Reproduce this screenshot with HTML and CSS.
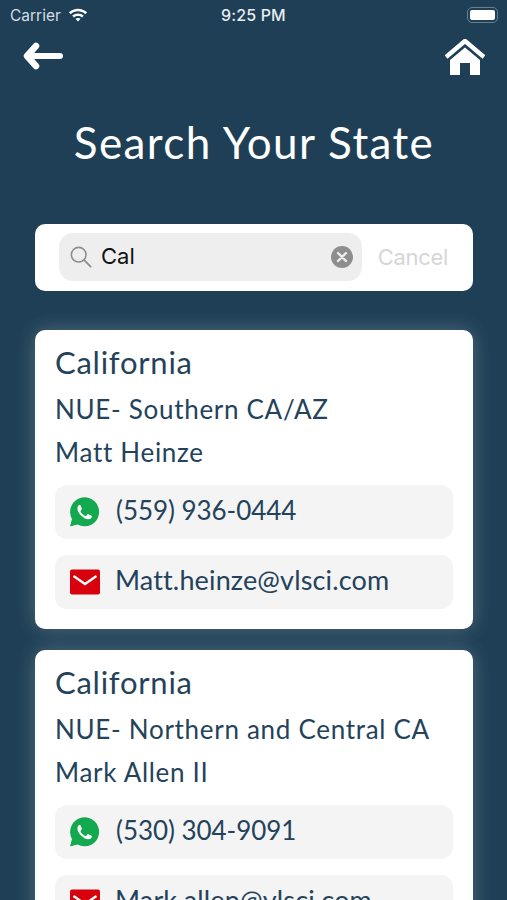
FILE: index.html
```html
<!DOCTYPE html>
<html lang="en">
<head>
<meta charset="utf-8">
<title>Search Your State</title>
<link rel="stylesheet" href="styles.css">
</head>
<body>
<div class="screen">
  <div class="status">
    <div class="status-left">
      <span>Carrier</span>
      <svg class="wifi" viewBox="0 0 22 16"><path d="M1 5.600C6.800.3 15.200.3 21 5.600l-2 2.100C14.300 3.500 7.700 3.500 3 7.700z"/><path d="M4.600 9.200c3.700-3.200 9.100-3.200 12.800 0l-2 2.100c-2.600-2.100-6.200-2.100-8.800 0z"/><path d="M8.200 12.700c1.600-1.200 4-1.200 5.600 0L11 15.600z"/></svg>
    </div>
    <span class="time">9:25 PM</span>
    <div class="battery"><span class="battery-fill"></span></div>
  </div>
  <div class="nav">
    <svg class="back" viewBox="0 0 40 28"><path d="M13 4 4 14l9 10" fill="none" stroke="#fff" stroke-width="6.500" stroke-linecap="round" stroke-linejoin="round"/><path d="M5 14h32" stroke="#fff" stroke-width="6" stroke-linecap="round"/></svg>
    <svg class="home" viewBox="0 0 40 36"><path d="M1 18 20 2l19 16" fill="none" stroke="#fff" stroke-width="4.500" stroke-linejoin="miter"/><path d="M5 21 20 8.500 35 21v15H25V24H15v12H5z" fill="#fff"/></svg>
  </div>
  <h1 class="title">Search Your State</h1>
  <div class="searchbar">
    <div class="field">
      <svg class="glass" viewBox="0 0 24 24"><circle cx="9.500" cy="9.500" r="8" fill="none" stroke="#8e8e8e" stroke-width="1.700"/><path d="m15.500 15.500 7 7" stroke="#8e8e8e" stroke-width="2" stroke-linecap="round"/></svg>
      <span class="query">Cal</span>
      <svg class="clear" viewBox="0 0 22 22"><circle cx="11" cy="11" r="11" fill="#8e8e8e"/><path d="m7 7 8 8m0-8-8 8" stroke="#eee" stroke-width="2.400" stroke-linecap="round"/></svg>
    </div>
    <span class="cancel">Cancel</span>
  </div>
  <div class="card">
    <div class="state">California</div>
    <div class="line">NUE- Southern CA/AZ</div>
    <div class="line">Matt Heinze</div>
    <div class="contact">
      <svg class="icon" viewBox="1 0 30 30"><path d="M1 29.500 3 22A14.500 14.500 0 1 1 8.500 27.500z" fill="#12a94f"/><path d="M10.800 7.800c-.7 0-2.400 1.300-2.400 3.700 0 4.500 6.300 10.800 10.800 10.800 2.400 0 3.600-1.700 3.600-2.600 0-.6-.2-.9-.6-1.100l-2.800-1.400c-.5-.2-.8 0-1.100.4l-1 1.200c-.3.300-.6.300-1 .1-2-.9-3.700-2.500-4.700-4.500-.2-.4-.1-.7.200-1l.8-1c.3-.3.300-.7.100-1.100l-1.100-2.700c-.3-.7-.6-.8-1.200-.8z" fill="#fff"/></svg>
      <span class="phone">(559) 936-0444</span>
    </div>
    <div class="contact">
      <svg class="icon mail" viewBox="0 0 30 25"><rect width="30" height="25" rx="2" fill="#d9000d"/><path d="m3.500 6.500 11.500 8 11.500-8" fill="none" stroke="#fff" stroke-width="2.400"/></svg>
      <span class="email">Matt.heinze@vlsci.com</span>
    </div>
  </div>
  <div class="card">
    <div class="state">California</div>
    <div class="line">NUE- Northern and Central CA</div>
    <div class="line">Mark Allen II</div>
    <div class="contact">
      <svg class="icon" viewBox="1 0 30 30"><path d="M1 29.500 3 22A14.500 14.500 0 1 1 8.500 27.500z" fill="#12a94f"/><path d="M10.800 7.800c-.7 0-2.400 1.300-2.400 3.700 0 4.500 6.300 10.800 10.800 10.800 2.400 0 3.600-1.700 3.600-2.600 0-.6-.2-.9-.6-1.100l-2.800-1.400c-.5-.2-.8 0-1.100.4l-1 1.200c-.3.300-.6.300-1 .1-2-.9-3.700-2.500-4.700-4.500-.2-.4-.1-.7.200-1l.8-1c.3-.3.300-.7.100-1.100l-1.100-2.700c-.3-.7-.6-.8-1.200-.8z" fill="#fff"/></svg>
      <span class="phone">(530) 304-9091</span>
    </div>
    <div class="contact">
      <svg class="icon mail" viewBox="0 0 30 25"><rect width="30" height="25" rx="2" fill="#d9000d"/><path d="m3.500 6.500 11.500 8 11.500-8" fill="none" stroke="#fff" stroke-width="2.400"/></svg>
      <span class="email">Mark.allen@vlsci.com</span>
    </div>
  </div>
</div>
</body>
</html>
```
FILE: styles.css
```css
* { box-sizing: border-box; }
html, body { margin: 0; padding: 0; height: 900px; overflow: hidden; }
.screen {
  height: 900px;
  overflow: hidden;
  background: #1e3f56;
  font-family: Lato, "Open Sans", sans-serif;
  color: #24435b;
  padding: 0 34px 0 35px;
}
.status {
  display: flex;
  align-items: center;
  justify-content: space-between;
  position: relative;
  height: 30px;
  margin: 0 -25px;
  color: #e8edf1;
  font: 15px "Inter", "Liberation Sans", sans-serif;
}
.status-left { display: flex; align-items: center; gap: 7px; font-size: 15.500px; color: #d5dde3; }
.wifi { width: 20px; height: 15px; fill: #fff; margin-bottom: 2px; }
.time { font-weight: 500; position: absolute; left: 211px; font-size: 16px; letter-spacing: .15px; }
.battery {
  width: 31px;
  height: 16px;
  border: 1.500px solid #66808f;
  border-radius: 5px;
  padding: 2px;
}
.battery-fill { display: block; height: 100%; background: #fff; border-radius: 2px; }
.nav {
  display: flex;
  justify-content: space-between;
  align-items: flex-start;
  margin: 9px -12px 0;
  height: 42px;
}
.back { width: 40px; height: 28px; margin-top: 3px; }
.home { width: 40px; height: 36px; }
.title {
  margin: 0;
  padding-top: 38px;
  box-sizing: content-box;
  height: 47px;
  text-align: center;
  font-weight: 400;
  font-size: 44px;
  line-height: 47px;
  letter-spacing: 1.400px;
  color: #fff;
}
.searchbar {
  display: flex;
  align-items: center;
  height: 67px;
  margin-top: 58px;
  padding: 0 25px 1px 24px;
  background: #fff;
  border-radius: 10px;
}
.field {
  flex: 1;
  display: flex;
  align-items: center;
  height: 48px;
  padding: 0 9px 0 11px;
  background: #eeeeee;
  border-radius: 14px;
  font: 22px "Inter", "Liberation Sans", sans-serif;
  color: #111;
}
.glass { width: 22px; height: 22px; }
.query { flex: 1; margin: 0 0 2px 9px; font-size: 22px; }
.clear { width: 22px; height: 22px; }
.cancel {
  margin: 0 0 1px 16px;
  font: 22px "Inter", "Liberation Sans", sans-serif;
  color: #d6d6d6;
  letter-spacing: -.3px;
}
.card {
  margin-top: 21px;
  padding: 14px 20px 20px;
  background: #fff;
  border-radius: 10px;
  box-shadow: 0 0 20px rgba(255, 255, 255, .24);
}
.searchbar + .card { margin-top: 39px; }
.state { font-size: 31px; line-height: 36px; letter-spacing: .75px; }
.line { font-size: 26px; line-height: 43px; letter-spacing: .7px; }
.state + .line { margin-top: 8px; }
.contact {
  display: flex;
  align-items: center;
  gap: 16px;
  height: 54px;
  margin-top: 16px;
  padding: 0 15px;
  background: #f4f4f5;
  border-radius: 12px;
  white-space: nowrap;
}
.phone { font-size: 26px; letter-spacing: -.05px; margin-bottom: 5px; }
.email { font-size: 27px; letter-spacing: .15px; margin: 0 0 5px -1px; }
.line + .contact { margin-top: 11px; }
.icon { width: 30px; height: 30px; flex: none; }
.mail { margin-bottom: 1px; }
```
